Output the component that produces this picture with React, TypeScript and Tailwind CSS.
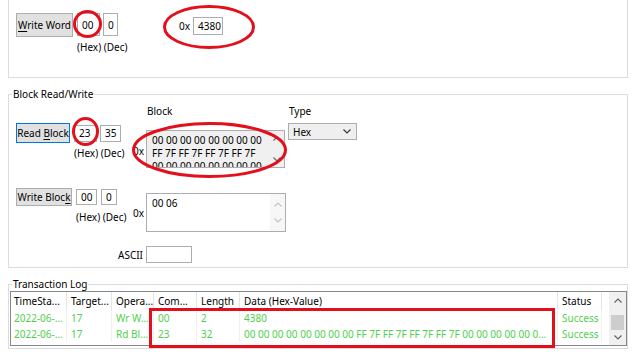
import React from 'react'

const GREEN = 'text-[#4fcf4f]'

function ChevUp({ color = '#606060' }: { color?: string }) {
  return (
    <svg width="8" height="5" viewBox="0 0 8 5">
      <polyline points="0.5,4.5 4,1 7.5,4.5" fill="none" stroke={color} strokeWidth="1.1" />
    </svg>
  )
}

function ChevDown({ color = '#606060' }: { color?: string }) {
  return (
    <svg width="8" height="5" viewBox="0 0 8 5">
      <polyline points="0.5,0.5 4,4 7.5,0.5" fill="none" stroke={color} strokeWidth="1.1" />
    </svg>
  )
}

function Box({ className = '', children }: { className?: string; children?: React.ReactNode }) {
  return (
    <div className={`flex items-center pl-[4px] bg-white border border-[#abadb3] leading-[14px] ${className}`}>
      {children}
    </div>
  )
}

function Btn({ className = '', children }: { className?: string; children: React.ReactNode }) {
  return (
    <div className={`flex items-center justify-center bg-[#e1e1e1] border leading-[14px] ${className}`}>
      {children}
    </div>
  )
}

const cols = [
  { name: 'TimeSta...', w: 'w-[56px] pl-[3px]' },
  { name: 'Target...', w: 'w-[45px] pl-[4px]' },
  { name: 'Opera...', w: 'w-[42px] pl-[4px]' },
  { name: 'Com...', w: 'w-[43px] pl-[4px]' },
  { name: 'Length', w: 'w-[43px] pl-[4px]' },
  { name: 'Data (Hex-Value)', w: 'w-[318px] pl-[4px]' },
  { name: 'Status', w: 'w-[44px] pl-[4px]' },
]

const rows = [
  ['2022-06-...', '17', 'Wr W...', '00', '2', '4380', 'Success'],
  [
    '2022-06-...',
    '17',
    'Rd Bl...',
    '23',
    '32',
    '00 00 00 00 00 00 00 00 FF 7F FF 7F FF 7F FF 7F 00 00 00 00 00 0...',
    'Success',
  ],
]

export default function App() {
  return (
    <div className="relative w-[640px] h-[363px] overflow-hidden bg-white text-[10px] text-black [font-family:'Noto_Sans',sans-serif]">
      {/* word write */}
      <div className="ml-[8px] w-[620px] h-[78px] border-x border-b border-[#dcdcdc]">
        <div className="flex items-start pl-[7px] pt-[13px]">
          <Btn className="w-[57px] h-[24px] border-[#adadad]">
            <span>
              <u className="underline-offset-[2px]">W</u>rite Word
            </span>
          </Btn>
          <div className="ml-[4px] w-[50px] flex flex-col">
            <div className="flex gap-[3px]">
              <Box className="w-[23px] h-[23px]">00</Box>
              <Box className="w-[15px] h-[23px]">0</Box>
            </div>
            <span className="mt-[4px] leading-[14px] whitespace-nowrap">(Hex) (Dec)</span>
          </div>
          <div className="ml-[52px] mt-[4px] h-[18px] flex items-center">
            <span className="w-[14px] leading-[14px]">0x</span>
            <Box className="w-[30px] h-[18px]">4380</Box>
          </div>
        </div>
      </div>

      {/* block read/write */}
      <fieldset className="ml-[8px] mt-[9px] w-[620px] h-[181px] border border-[#dcdcdc]">
        <legend className="ml-[3px] px-[1px] leading-[14px]">Block Read/Write</legend>
        <div className="flex h-[87px]">
          <div className="w-[124px] pl-[7px] pt-[22px]">
            <div className="flex items-center h-[20px]">
              <Btn className="w-[54px] h-[20px] border-[#0078d7]">
                <span>
                  Read <u className="underline-offset-[2px]">B</u>lock
                </span>
              </Btn>
              <Box className="ml-[4px] w-[23px] h-[17px]">23</Box>
              <Box className="ml-[3px] w-[21px] h-[17px]">35</Box>
            </div>
            <div className="mt-[3px] pl-[58px] leading-[14px] whitespace-nowrap">(Hex) (Dec)</div>
          </div>
          <div className="w-[13px] pt-[43px] leading-[14px]">0x</div>
          <div className="w-[139px] pt-[3px]">
            <div className="pl-[1px] leading-[14px]">Block</div>
            <div className="mt-[12px] h-[38px] flex overflow-hidden border border-[#abadb3] bg-[#f0f0f0]">
              <div className="flex-1 pl-[5px] pt-[3px] leading-[13px] overflow-hidden">
                <div>00 00 00 00 00 00 00 00</div>
                <div>FF 7F FF 7F FF 7F FF 7F</div>
                <div>00 00 00 00 00 00 00 00</div>
              </div>
              <div className="w-[15px] flex flex-col items-center justify-between py-[5px]">
                <ChevUp />
                <ChevDown />
              </div>
            </div>
          </div>
          <div className="ml-[3px] pt-[3px]">
            <div className="pl-[1px] leading-[14px]">Type</div>
            <div className="mt-[5px] w-[69px] h-[17px] flex items-center justify-between pl-[4px] pr-[5px] bg-[#efefef] border border-[#adadad] leading-[14px]">
              <span>Hex</span>
              <ChevDown color="#333" />
            </div>
          </div>
        </div>

        <div className="flex h-[58px]">
          <div className="w-[124px] pl-[7px]">
            <div className="flex items-center h-[18px]">
              <Btn className="w-[56px] h-[18px] border-[#adadad]">
                <span>
                  Write Bloc<u className="underline-offset-[2px]">k</u>
                </span>
              </Btn>
              <Box className="ml-[4px] w-[21px] h-[16px]">00</Box>
              <Box className="ml-[4px] w-[16px] h-[16px]">0</Box>
            </div>
            <div className="mt-[4px] pl-[60px] leading-[14px] whitespace-nowrap">(Hex) (Dec)</div>
          </div>
          <div className="w-[13px] pt-[18px] leading-[14px]">0x</div>
          <div className="mt-[5px] w-[140px] h-[39px] flex border border-[#abadb3] bg-white">
            <div className="flex-1 pl-[5px] pt-[3px] leading-[13px]">00 06</div>
            <div className="w-[15px] flex flex-col items-center justify-between py-[8px] bg-[#f7f7f7]">
              <ChevUp color="#c4c4c4" />
              <ChevDown color="#c4c4c4" />
            </div>
          </div>
        </div>

        <div className="flex items-center h-[17px]">
          <div className="w-[137px] pr-[3px] text-right leading-[14px]">ASCII</div>
          <div className="w-[46px] h-[17px] bg-white border border-[#abadb3]" />
        </div>
      </fieldset>

      {/* transaction log */}
      <fieldset className="ml-[8px] mt-[9px] w-[620px] h-[72px] border border-[#dcdcdc]">
        <legend className="ml-[3px] px-[1px] leading-[14px]">Transaction Log</legend>
        <div className="ml-[1px] w-[617px] h-[55px] flex border border-[#828790] bg-white">
          <div className="flex-1">
            <div className="flex h-[18px] items-center leading-[14px]">
              {cols.map((c) => (
                <div key={c.name} className={`${c.w} h-full flex items-center border-r border-[#e5e5e5] whitespace-nowrap overflow-hidden`}>
                  {c.name}
                </div>
              ))}
            </div>
            {rows.map((r, i) => (
              <div key={i} className={`flex h-[16px] items-center leading-[14px] ${GREEN}`}>
                {r.map((v, j) => (
                  <div key={j} className={`${cols[j].w} h-full flex items-center border-r border-[#f0f0f0] whitespace-nowrap overflow-hidden`}>
                    {v}
                  </div>
                ))}
              </div>
            ))}
          </div>
          <div className="w-[17px] flex flex-col items-center bg-[#f0f0f0]">
            <div className="h-[17px] flex items-center justify-center">
              <ChevUp />
            </div>
            <div className="mt-[6px] w-[13px] h-[15px] bg-[#cdcdcd]" />
            <div className="flex-1" />
            <div className="h-[15px] flex items-center justify-center">
              <ChevDown />
            </div>
          </div>
        </div>
      </fieldset>

      {/* red annotations */}
      <svg className="absolute inset-0 pointer-events-none" width="640" height="363" viewBox="0 0 640 363">
        <g fill="none" stroke="#e3101b" strokeWidth="3">
          <ellipse cx="87.5" cy="24" rx="13" ry="12.5" />
          <ellipse cx="209" cy="27" rx="44.5" ry="20.5" />
          <ellipse cx="85.5" cy="131.5" rx="12" ry="13" />
          <ellipse cx="209.5" cy="150" rx="76" ry="26.5" />
          <rect x="150.5" y="309.5" width="403" height="37" />
        </g>
      </svg>
    </div>
  )
}
